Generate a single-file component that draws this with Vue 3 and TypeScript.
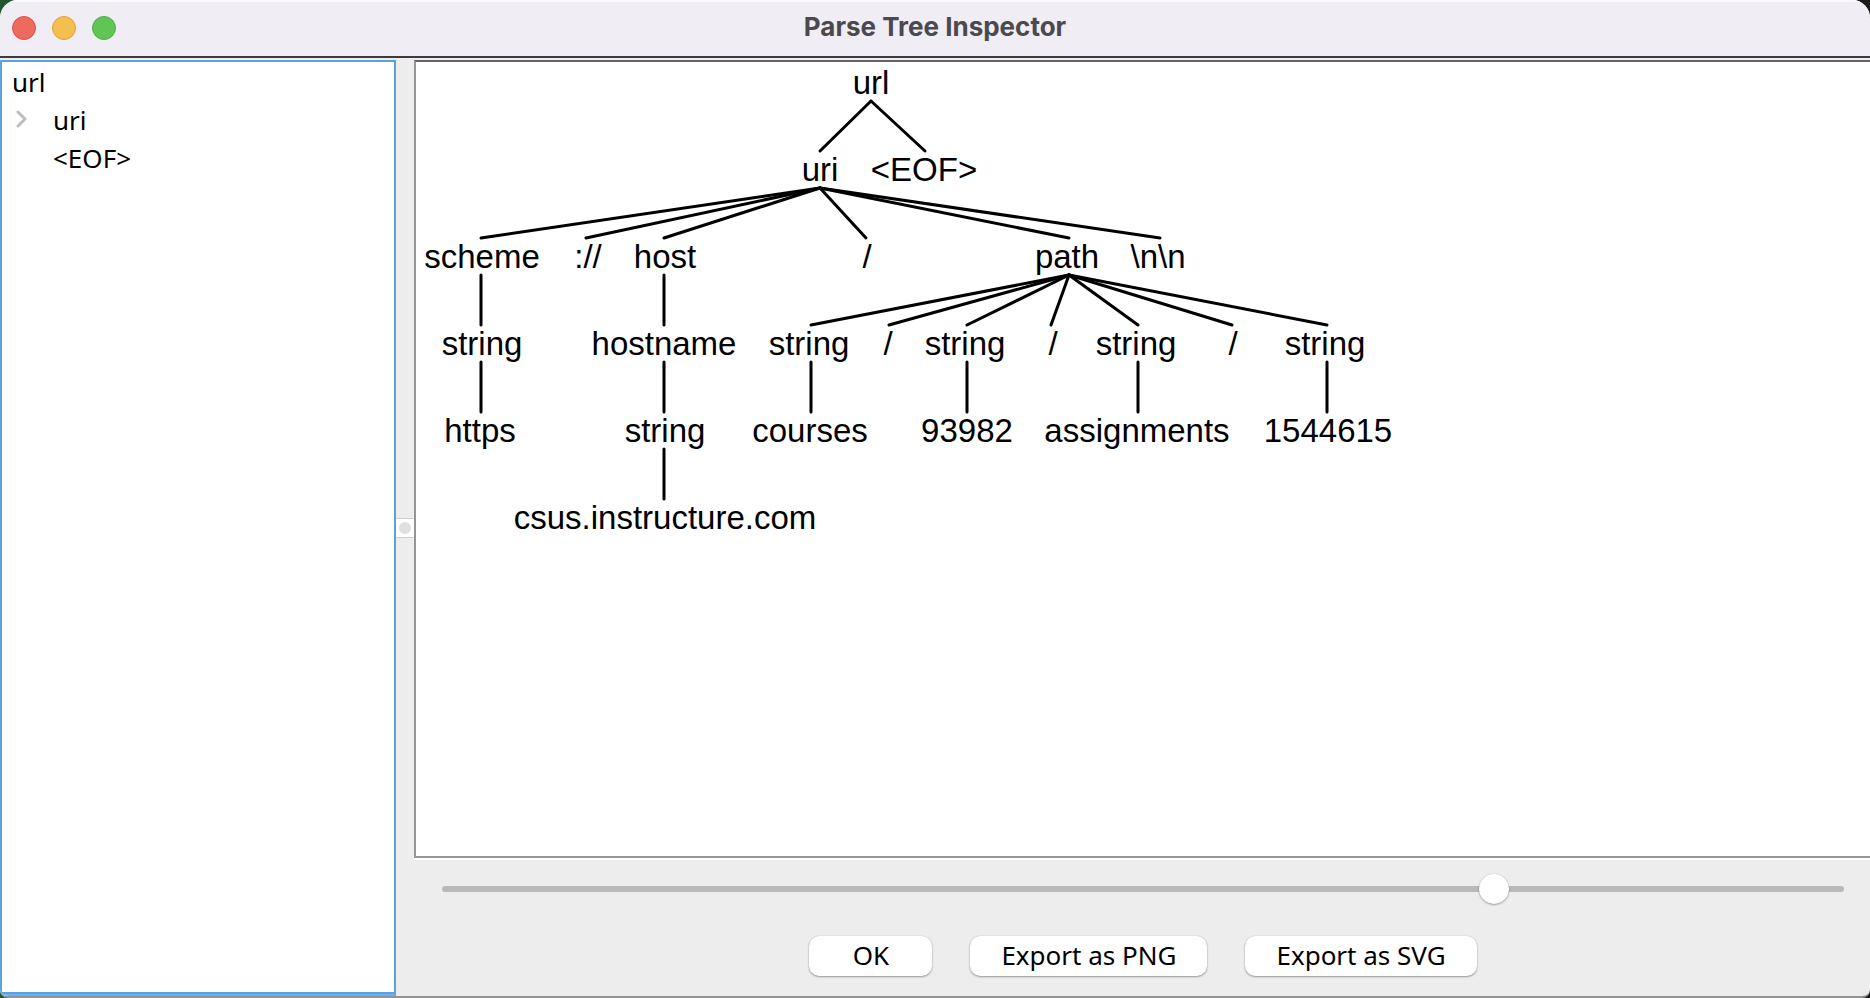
<script setup lang="ts">
import { ref } from 'vue'

interface TreeNode {
  label: string
  /** centre of the label */
  x: number
  /** where the edges meet the node */
  anchor: number
  level: number
  parent?: number
}

const LEVEL_STEP = 87
const FIRST_BASELINE = 32

const nodes: TreeNode[] = [
  { label: 'url', x: 455, anchor: 455, level: 0 },
  { label: 'uri', x: 404, anchor: 404, level: 1, parent: 0 },
  { label: '<EOF>', x: 508, anchor: 509, level: 1, parent: 0 },
  { label: 'scheme', x: 66, anchor: 65, level: 2, parent: 1 },
  { label: '://', x: 172, anchor: 170, level: 2, parent: 1 },
  { label: 'host', x: 249, anchor: 248, level: 2, parent: 1 },
  { label: '/', x: 451, anchor: 450, level: 2, parent: 1 },
  { label: 'path', x: 651, anchor: 653, level: 2, parent: 1 },
  { label: '\\n\\n', x: 742, anchor: 744, level: 2, parent: 1 },
  { label: 'string', x: 66, anchor: 65, level: 3, parent: 3 },
  { label: 'hostname', x: 248, anchor: 248, level: 3, parent: 5 },
  { label: 'string', x: 393, anchor: 395, level: 3, parent: 7 },
  { label: '/', x: 472, anchor: 473, level: 3, parent: 7 },
  { label: 'string', x: 549, anchor: 551, level: 3, parent: 7 },
  { label: '/', x: 637, anchor: 635, level: 3, parent: 7 },
  { label: 'string', x: 720, anchor: 722, level: 3, parent: 7 },
  { label: '/', x: 817, anchor: 816, level: 3, parent: 7 },
  { label: 'string', x: 909, anchor: 911, level: 3, parent: 7 },
  { label: 'https', x: 64, anchor: 65, level: 4, parent: 9 },
  { label: 'string', x: 249, anchor: 248, level: 4, parent: 10 },
  { label: 'courses', x: 394, anchor: 395, level: 4, parent: 11 },
  { label: '93982', x: 551, anchor: 551, level: 4, parent: 13 },
  { label: 'assignments', x: 721, anchor: 722, level: 4, parent: 15 },
  { label: '1544615', x: 912, anchor: 911, level: 4, parent: 17 },
  { label: 'csus.instructure.com', x: 249, anchor: 248, level: 5, parent: 19 },
]

const baseline = (level: number): number => FIRST_BASELINE + level * LEVEL_STEP

const edges = nodes
  .filter((n) => n.parent !== undefined)
  .map((n) => {
    const p = nodes[n.parent as number]
    return {
      x1: p.anchor,
      y1: baseline(p.level) + 7,
      x2: n.anchor,
      y2: baseline(n.level) - 30,
    }
  })

const zoom = ref(756)
</script>

<template>
  <div class="window">
    <header class="titlebar">
      <div class="lights">
        <button class="light close" type="button" aria-label="Close"></button>
        <button class="light minimize" type="button" aria-label="Minimize"></button>
        <button class="light maximize" type="button" aria-label="Zoom"></button>
      </div>
      <h1 class="title">Parse Tree Inspector</h1>
    </header>

    <div class="body">
      <nav class="sidebar" aria-label="Parse tree">
        <ul class="outline">
          <li class="row root">url</li>
          <li class="row child">
            <button class="expander" type="button" aria-label="Expand uri">
              <svg width="12" height="18" viewBox="0 0 12 18" aria-hidden="true">
                <path d="M2 2 L9 9 L2 16" fill="none" stroke="#bdbdbd" stroke-width="3" stroke-linecap="round" stroke-linejoin="round" />
              </svg>
            </button>
            <span>uri</span>
          </li>
          <li class="row child"><span>&lt;EOF&gt;</span></li>
        </ul>
      </nav>

      <div class="divider" role="separator" aria-orientation="vertical">
        <div class="grip"><span class="knob"></span></div>
      </div>

      <main class="content">
        <section class="canvas">
          <svg class="diagram" role="img" aria-label="Parse tree diagram">
            <g stroke="#000" stroke-width="3" stroke-linecap="round">
              <line v-for="(e, i) in edges" :key="i" :x1="e.x1" :y1="e.y1" :x2="e.x2" :y2="e.y2" />
            </g>
            <text v-for="(n, i) in nodes" :key="i" class="node" :x="n.x" :y="baseline(n.level)">{{ n.label }}</text>
          </svg>
        </section>

        <footer class="controls">
          <input v-model="zoom" class="slider" type="range" min="0" max="1000" aria-label="Zoom level" />
          <div class="buttons">
            <button class="btn" type="button">OK</button>
            <button class="btn" type="button">Export as PNG</button>
            <button class="btn" type="button">Export as SVG</button>
          </div>
        </footer>
      </main>
    </div>
  </div>
</template>

<style>
body {
  margin: 0;
  background: linear-gradient(90deg, #215733 50%, #1b1a1c 50%);
}
</style>

<style scoped>
.window {
  box-sizing: border-box;
  display: flex;
  flex-direction: column;
  min-height: 100vh;
  overflow: hidden;
  border-bottom: 2px solid #929292;
  border-radius: 18px 18px 8px 8px;
  background: #ededed;
  color: #000;
  font-family: "Noto Sans", "Open Sans", sans-serif;
  font-size: 26px;
}

.titlebar {
  box-sizing: border-box;
  display: grid;
  grid-template-columns: 1fr auto 1fr;
  align-items: center;
  height: 58px;
  padding: 0 12px;
  border-bottom: 2px solid #3d3b3e;
  background: #f0edf4;
  box-shadow: inset 0 2px #faf9fb;
}

.lights {
  display: flex;
  gap: 16px;
}

.light {
  box-sizing: border-box;
  width: 24px;
  height: 24px;
  padding: 0;
  border: 1px solid;
  border-radius: 50%;
}

.close {
  border-color: #d65348;
  background: #ed6a5f;
}

.minimize {
  border-color: #d9a23c;
  background: #f5bf4f;
}

.maximize {
  border-color: #50ac41;
  background: #61c555;
}

.title {
  margin: 0;
  padding-bottom: 2px;
  color: #4b494e;
  font: 700 26px/32px Inter, sans-serif;
}

.body {
  display: flex;
  flex: 1;
  padding-top: 2px;
}

.sidebar {
  box-sizing: border-box;
  width: 396px;
  border: 2px solid #5aa2e0;
  border-bottom-color: #66b3f8;
  background: #fff;
  box-shadow: inset 0 -2px #5aa2e0;
}

.outline {
  margin: 0;
  padding: 1px 0 0;
  list-style: none;
}

.row {
  position: relative;
  display: flex;
  align-items: center;
  height: 38px;
  line-height: 38px;
}

.root {
  padding-left: 10px;
}

.child {
  padding-left: 51px;
}

.expander {
  position: absolute;
  left: 14px;
  top: 9px;
  display: flex;
  padding: 0;
  border: 0;
  background: none;
}

.divider {
  display: flex;
  align-items: center;
  width: 18px;
}

.grip {
  box-sizing: border-box;
  display: flex;
  align-items: center;
  justify-content: center;
  width: 18px;
  height: 20px;
  border: solid #d0d0d0;
  border-width: 1px 0;
  background: #fff;
}

.knob {
  width: 12px;
  height: 12px;
  border-radius: 50%;
  background: #e0e0e0;
}

.content {
  display: flex;
  flex: 1;
  flex-direction: column;
  min-width: 0;
}

.canvas {
  display: flex;
  flex: 1;
  border: solid #969696;
  border-width: 2px 0 2px 2px;
  border-top-color: #656565;
  background: #fff;
  box-shadow: 0 2px #fff;
}

.diagram {
  flex: 1;
  min-width: 0;
  min-height: 500px;
}

.node {
  font: 33px "Liberation Sans", Arial, sans-serif;
  text-anchor: middle;
}

.controls {
  display: flex;
  flex-direction: column;
  gap: 32px;
  padding: 16px 26px 20px 28px;
}

.slider {
  width: 100%;
  height: 30px;
  margin: 0;
  appearance: none;
  background: none;
}

.slider::-webkit-slider-runnable-track {
  height: 6px;
  border-radius: 3px;
  background: #b9b9b9;
}

.slider::-webkit-slider-thumb {
  width: 30px;
  height: 30px;
  margin-top: -12px;
  appearance: none;
  border-radius: 50%;
  background: #fff;
  box-shadow: 0 1px 2px #0000004d, 0 0 1px #00000040;
}

.buttons {
  display: flex;
  justify-content: center;
  gap: 38px;
}

.btn {
  min-width: 123px;
  height: 40px;
  padding: 0 31px 3px;
  border: 0;
  border-radius: 10px;
  background: #fff;
  box-shadow: 0 1px 2px #00000059, 0 0 1px #00000040;
  color: #000;
  font: 26px/36px "Noto Sans", "Open Sans", sans-serif;
}
</style>
